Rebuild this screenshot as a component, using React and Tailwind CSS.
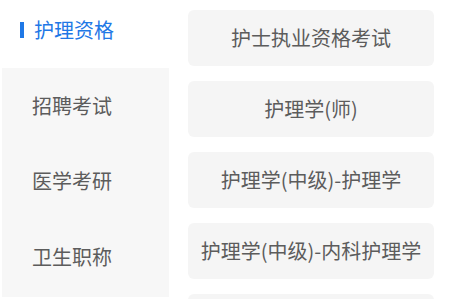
import React from "react";

const menus = ["护理资格", "招聘考试", "医学考研", "卫生职称"];
const subjects = [
  "护士执业资格考试",
  "护理学(师)",
  "护理学(中级)-护理学",
  "护理学(中级)-内科护理学",
  "",
];

const App = () => {
  const active = 0;

  return (
    <div
      className="flex h-[299px] w-[450px] overflow-hidden bg-white"
      style={{ fontFamily: '"Noto Sans CJK SC", "Noto Sans", sans-serif' }}
    >
      {/* Left menu */}
      <div className="mb-[2px] ml-[2px] flex w-[167px] shrink-0 flex-col bg-[#f7f7f7]">
        {menus.map((name, i) =>
          i === active ? (
            <div key={name} className="flex h-[68px] shrink-0 items-center bg-white pb-[8px] pl-[18px]">
              <span className="mr-[10px] h-[16px] w-[4px] bg-[#1f78e6]"></span>
              <span className="text-[20px] leading-none text-[#1f78e6]">{name}</span>
            </div>
          ) : (
            <div key={name} className="flex h-[75.5px] shrink-0 items-center pl-[30px]">
              <span className="text-[20px] leading-none text-[#5c5c5c]">{name}</span>
            </div>
          )
        )}
      </div>

      {/* Right list */}
      <div className="flex flex-1 flex-col gap-[15.5px] pl-[19px] pr-[16px] pt-[10px]">
        {subjects.map((s, i) => (
          <div
            key={i}
            className="flex h-[55.5px] shrink-0 items-center justify-center rounded-[6px] bg-[#f5f5f5]"
          >
            <span className="text-[20px] leading-none text-[#5c5c5c]">{s}</span>
          </div>
        ))}
      </div>
    </div>
  );
};

export default App;
